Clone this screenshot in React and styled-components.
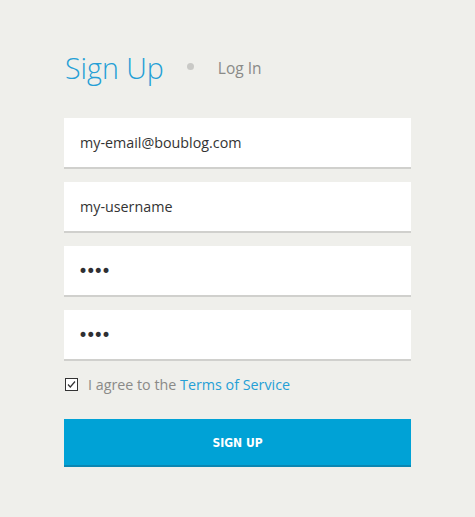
import React from "react";
import styled, { createGlobalStyle } from "styled-components";

const Global = createGlobalStyle`
  html, body { margin: 0; padding: 0; background: #efefeb; }
  body { font-family: "Open Sans", "Liberation Sans", sans-serif; }
  * { box-sizing: border-box; }
`;

const Page = styled.div`
  width: 475px;
  height: 517px;
  background: #efefeb;
  padding: 48px 64px 0 64px;
`;

const Header = styled.div`
  display: flex;
  align-items: center;
  height: 40px;
  margin-bottom: 30px;
`;

const Title = styled.h1`
  margin: 0;
  font-family: "Open Sans", sans-serif;
  font-weight: 300;
  font-size: 28.6px;
  color: #259fd6;
  line-height: 40px;
  padding-left: 1px;
`;

const Dot = styled.span`
  width: 7px;
  height: 7px;
  border-radius: 50%;
  background: #c9c9c6;
  margin: -3px 0 0 23px;
`;

const Tab = styled.span`
  font-size: 15.5px;
  color: #8a8a88;
  margin: -1px 0 0 24px;
`;

const Form = styled.form`
  display: flex;
  flex-direction: column;
  gap: 13px;
`;

const Input = styled.input`
  width: 347px;
  height: 51px;
  border: none;
  border-bottom: 2px solid #d0d0cd;
  background: #ffffff;
  padding: 0 16px;
  font-family: "Open Sans", sans-serif;
  font-size: 14.3px;
  color: #333;
  outline: none;
  &[type="password"] {
    font-family: "DejaVu Sans", sans-serif;
    font-size: 17px;
    letter-spacing: -2.4px;
    color: #2f2f33;
    padding-left: 14px;
  }
`;

const Agree = styled.label`
  display: flex;
  align-items: center;
  gap: 10px;
  margin-top: 12px;
  font-size: 14.3px;
  color: #8a8a88;
  height: 22px;
`;

const Box = styled.span`
  width: 13px;
  height: 13px;
  border: 1px solid #333;
  background: #fff;
  display: flex;
  align-items: center;
  justify-content: center;
  margin-left: 1px;
`;

const Link = styled.a`
  color: #259fd6;
  text-decoration: none;
`;

const Button = styled.button`
  margin-top: 24px;
  width: 347px;
  height: 48px;
  border: none;
  border-bottom: 2px solid #0a86b2;
  background: #00a2d6;
  color: #fff;
  font-family: "DejaVu Sans", sans-serif;
  font-stretch: condensed;
  font-weight: 700;
  font-size: 12px;
  cursor: pointer;
  padding: 2px 0 0;
`;

export default function App() {
  return (
    <>
      <Global />
      <Page>
        <Header>
          <Title>Sign Up</Title>
          <Dot />
          <Tab>Log In</Tab>
        </Header>
        <Form onSubmit={(e) => e.preventDefault()}>
          <Input type="text" defaultValue="my-email@boublog.com" />
          <Input type="text" defaultValue="my-username" />
          <Input type="password" defaultValue="1234" />
          <Input type="password" defaultValue="1234" />
        </Form>
        <Agree>
          <Box>
            <svg width="11" height="11" viewBox="0 0 11 11">
              <path d="M2 5.5 L4.3 8 L9 2.5" fill="none" stroke="#333" strokeWidth="1.2" />
            </svg>
          </Box>
          <span>
            I agree to the <Link href="#">Terms of Service</Link>
          </span>
        </Agree>
        <Button type="submit">SIGN UP</Button>
      </Page>
    </>
  );
}
